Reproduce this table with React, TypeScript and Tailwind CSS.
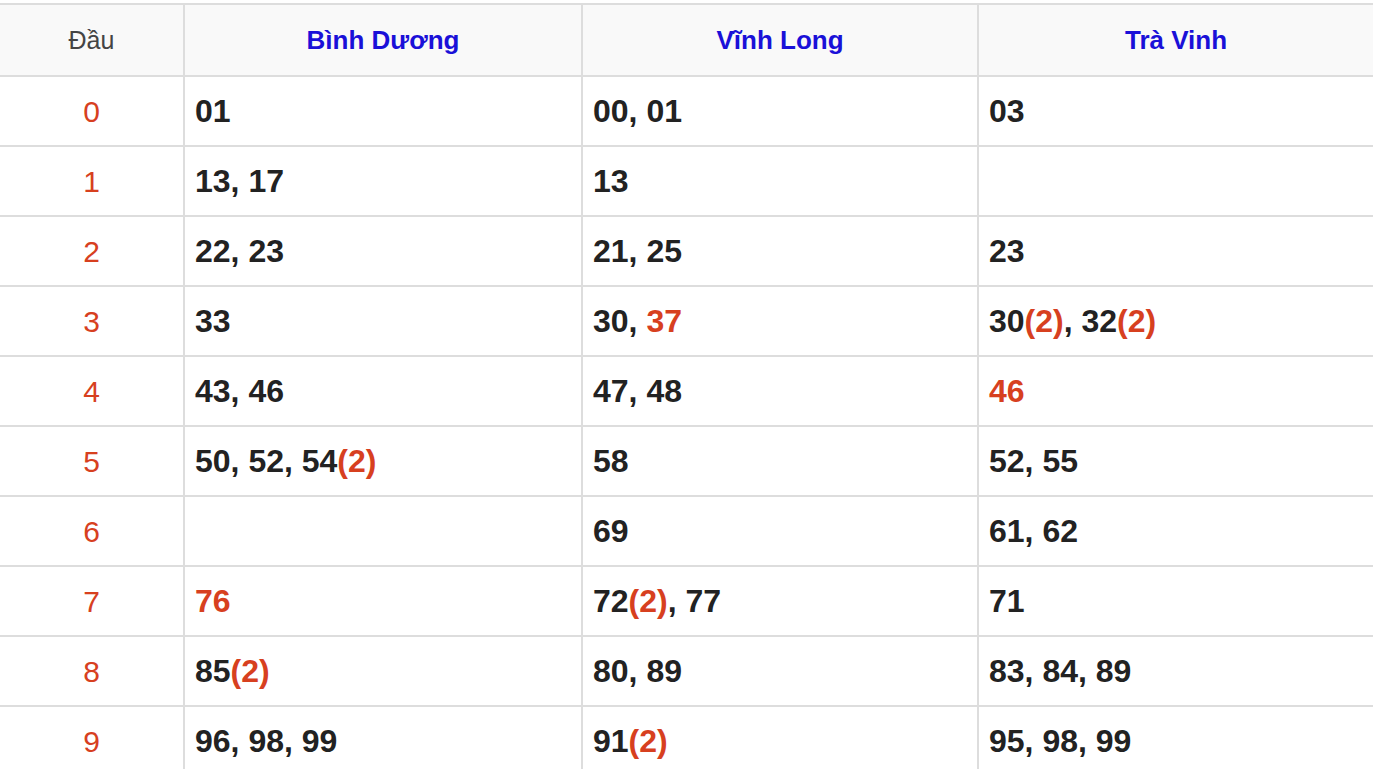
type Part = { t: string; hot?: boolean; count?: number }

const provinces = ['Bình Dương', 'Vĩnh Long', 'Trà Vinh']

// each cell: list of numbers; hot = whole number red, count = red "(n)" suffix
const rows: Part[][][] = [
  [[{ t: '01' }], [{ t: '00' }, { t: '01' }], [{ t: '03' }]],
  [[{ t: '13' }, { t: '17' }], [{ t: '13' }], []],
  [[{ t: '22' }, { t: '23' }], [{ t: '21' }, { t: '25' }], [{ t: '23' }]],
  [[{ t: '33' }], [{ t: '30' }, { t: '37', hot: true }], [{ t: '30', count: 2 }, { t: '32', count: 2 }]],
  [[{ t: '43' }, { t: '46' }], [{ t: '47' }, { t: '48' }], [{ t: '46', hot: true }]],
  [[{ t: '50' }, { t: '52' }, { t: '54', count: 2 }], [{ t: '58' }], [{ t: '52' }, { t: '55' }]],
  [[], [{ t: '69' }], [{ t: '61' }, { t: '62' }]],
  [[{ t: '76', hot: true }], [{ t: '72', count: 2 }, { t: '77' }], [{ t: '71' }]],
  [[{ t: '85', count: 2 }], [{ t: '80' }, { t: '89' }], [{ t: '83' }, { t: '84' }, { t: '89' }]],
  [[{ t: '96' }, { t: '98' }, { t: '99' }], [{ t: '91', count: 2 }], [{ t: '95' }, { t: '98' }, { t: '99' }]],
]

function Cell({ parts }: { parts: Part[] }) {
  return (
    <div className="h-[70px] border-b-2 border-l-2 border-[#dddddd] flex items-center pl-[10px] text-[32px] font-bold text-[#222222]">
      {parts.map((p, i) => (
        <span key={i}>
          {i > 0 && ', '}
          <span className={p.hot ? 'text-[#d7401f]' : ''}>{p.t}</span>
          {p.count && <span className="text-[#d7401f]">({p.count})</span>}
        </span>
      ))}
    </div>
  )
}

export default function App() {
  return (
    <div className="w-[1373px] h-[769px] overflow-hidden bg-white pt-[3px]" style={{ fontFamily: '"Liberation Sans", Arial, sans-serif' }}>
      <div className="grid grid-cols-[183px_398px_396px_1fr] border-t-2 border-[#dddddd]">
        <div className="h-[72px] border-b-2 border-[#dddddd] bg-[#f9f9f9] flex items-center justify-center pt-[1px] text-[25px] text-[#444444]">
          Đầu
        </div>
        {provinces.map(name => (
          <div
            key={name}
            className="h-[72px] border-b-2 border-l-2 border-[#dddddd] bg-[#f9f9f9] flex items-center justify-center pt-[1px] text-[26px] font-bold text-[#1a10d8]"
          >
            {name}
          </div>
        ))}

        {rows.map((cells, head) => (
          <div key={head} className="contents">
            <div className="h-[70px] border-b-2 border-[#dddddd] flex items-center justify-center text-[30px] text-[#d7401f]">
              {head}
            </div>
            {cells.map((parts, i) => (
              <Cell key={i} parts={parts} />
            ))}
          </div>
        ))}
      </div>
    </div>
  )
}
